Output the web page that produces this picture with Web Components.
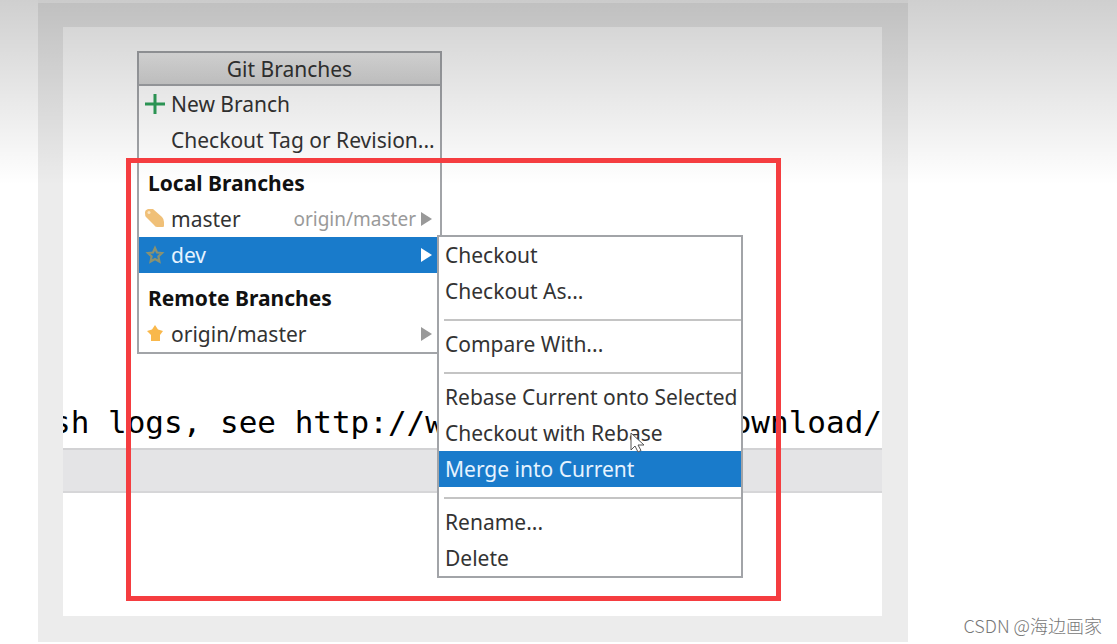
<!DOCTYPE html>
<html lang="en">
<head>
<meta charset="utf-8">
<title>Git Branches</title>
<style>
  html, body { margin: 0; min-height: 100%; background: #fff; }
  body { position: relative; min-height: 100vh; overflow: hidden; font-family: "Noto Sans", sans-serif; }
</style>
</head>
<body>
<git-screen>
  <console-frame>
    <span slot="start">sh logs, see http://w</span>
    <span slot="end">ownload/</span>
  </console-frame>
  <popup-menu slot="overlay" class="branches" heading="Git Branches">
    <menu-row icon="plus">New Branch</menu-row>
    <menu-row icon="none">Checkout Tag or Revision...</menu-row>
    <menu-heading>Local Branches</menu-heading>
    <menu-row icon="tag" arrow hint="origin/master">master</menu-row>
    <menu-row icon="star" arrow selected>dev</menu-row>
    <menu-heading>Remote Branches</menu-heading>
    <menu-row icon="badge" arrow>origin/master</menu-row>
  </popup-menu>
  <popup-menu slot="overlay" class="actions">
    <menu-row>Checkout</menu-row>
    <menu-row>Checkout As...</menu-row>
    <menu-rule></menu-rule>
    <menu-row>Compare With...</menu-row>
    <menu-rule></menu-rule>
    <menu-row>Rebase Current onto Selected</menu-row>
    <menu-row>Checkout with Rebase</menu-row>
    <menu-row selected>Merge into Current</menu-row>
    <menu-rule></menu-rule>
    <menu-row>Rename...</menu-row>
    <menu-row>Delete</menu-row>
  </popup-menu>
  <span slot="credit">CSDN @海边画家</span>
</git-screen>

<script>
class Base extends HTMLElement {
  constructor() {
    super();
    this.attachShadow({ mode: "open" });
  }
  connectedCallback() { this.shadowRoot.innerHTML = this.render(); }
}

const icons = {
  plus: '<path d="M8.500 0h3v8.500H20v3h-8.500V20h-3v-8.500H0v-3h8.500z" fill="#2fa05a"/>',
  tag: '<path d="M0 3Q0 1 3 0L8 0l9 8q2 2 2 5v4q0 1-1 1h-6q-2 0-3-2L1 8Q0 7 0 4z" fill="#f0c078"/><circle cx="4" cy="3.500" r="1.500" fill="#fbe6c4"/>',
  star: '<path d="M10 3l2 4.500 5 .5-3.600 3.400 1 5.100-4.400-2.500-4.400 2.500 1-5.100L3 8l5-.5z" fill="none" stroke="#8b9270" stroke-width="2.200"/>',
  badge: '<path d="M10 1l3 4.500 5 1.500-3 4v6H6v-6L2 7l5-1.500z" fill="#f9b84b"/>',
  none: ''
};

customElements.define("git-screen", class extends Base {
  render() {
    return `<style>
      :host { display: block; }
      ::slotted([slot="credit"]) {
        position: absolute; right: 15px; bottom: 5px;
        font: 300 18px/28px "Noto Sans CJK SC", sans-serif; color: #777;
      }
      ::slotted(.branches) { position: absolute; left: 137px; top: 51px; width: 305px; }
      ::slotted(.actions) { position: absolute; left: 437px; top: 235px; width: 306px; z-index: 1; }
      .shade {
        position: absolute; inset: 0 0 auto 0; height: 185px; z-index: 2; pointer-events: none;
        background: linear-gradient(rgba(0,0,0,.19), rgba(0,0,0,0));
      }
      .marker {
        position: absolute; left: 126px; top: 158px; width: 655px; height: 443px;
        box-sizing: border-box; border: 5px solid #f53d40; z-index: 3; pointer-events: none;
      }
      .pointer { position: absolute; left: 630px; top: 432px; width: 16px; height: 22px; z-index: 4; }
    </style>
    <slot></slot>
    <slot name="overlay"></slot>
    <div class="shade"></div>
    <div class="marker"></div>
    <svg class="pointer" viewBox="0 0 16 22"><path d="M1 1v17l4-4 3 6 3-1.500-3-5.500h6z" fill="#fff" stroke="#555"/></svg>
    <slot name="credit"></slot>`;
  }
});

customElements.define("console-frame", class extends Base {
  render() {
    return `<style>
      :host {
        display: flex; flex-direction: column; box-sizing: border-box;
        margin: 0 209px 0 38px; padding: 24px 26px 26px 25px;
        min-height: calc(100vh - 2px); background: #ececec;
        border-top: 3px solid #fafafa;
      }
      .log {
        box-sizing: border-box; height: 421px; padding-bottom: 8px; overflow: hidden;
        display: flex; align-items: flex-end; justify-content: space-between;
        background: #fff; color: #000; white-space: nowrap;
        font: 31px/36px "DejaVu Sans Mono", monospace;
      }
      .start { margin-left: -11px; }
      .band {
        height: 45px; box-sizing: border-box; background: #e4e4e6;
        border-top: 2px solid #d2d2d4; border-bottom: 2px solid #d6d6d8;
      }
      .blank { flex: 1; background: #fff; }
    </style>
    <div class="log"><span class="start"><slot name="start"></slot></span><slot name="end"></slot></div>
    <div class="band"></div>
    <div class="blank"></div>`;
  }
});

customElements.define("popup-menu", class extends Base {
  render() {
    const heading = this.getAttribute("heading");
    return `<style>
      :host {
        display: flex; flex-direction: column; box-sizing: border-box;
        border: 2px solid #a2a4a8; background: #fff; font-size: 21px; line-height: 36px; color: #333;
      }
      header {
        height: 31px; line-height: 32px; text-align: center;
        background: linear-gradient(#eee, #d2d2d2); border-bottom: 2px solid #a2a4a8;
      }
    </style>
    ${heading ? `<header>${heading}</header>` : ""}
    <slot></slot>`;
  }
});

customElements.define("menu-row", class extends Base {
  render() {
    const icon = this.getAttribute("icon");
    const hint = this.getAttribute("hint");
    return `<style>
      :host { display: block; }
      button {
        display: flex; align-items: center; width: 100%; height: 36px; margin: 0; border: 0;
        padding: 0 8px 0 6px; background: none; font: inherit; color: inherit;
        text-align: left; white-space: nowrap;
      }
      :host([selected]) button { background: #197bcb; color: #e6f3ff; }
      .icon { width: 20px; height: 20px; margin-right: 6px; flex: none; }
      .label { flex: 1; }
      .hint { color: #9a9a9a; margin-right: 5px; font-size: 19px; }
      .arrow { width: 11px; height: 14px; fill: #999; flex: none; }
      :host([selected]) .arrow { fill: #fff; }
    </style>
    <button type="button">
      ${icon ? `<svg class="icon" viewBox="0 0 20 20">${icons[icon]}</svg>` : ""}
      <span class="label"><slot></slot></span>
      ${hint ? `<span class="hint">${hint}</span>` : ""}
      ${this.hasAttribute("arrow") ? '<svg class="arrow" viewBox="0 0 11 14"><path d="M0 0l11 7L0 14z"/></svg>' : ""}
    </button>`;
  }
});

customElements.define("menu-heading", class extends Base {
  render() {
    return `<style>
      :host { display: block; padding: 7px 9px 0; font-weight: 700; color: #111; }
    </style><slot></slot>`;
  }
});

customElements.define("menu-rule", class extends Base {
  render() {
    return `<style>
      :host { display: block; padding: 10px 0 5px 5px; }
      hr { margin: 0; border: 0; height: 2px; background: #c4c4c4; }
    </style><hr>`;
  }
});
</script>
</body>
</html>
